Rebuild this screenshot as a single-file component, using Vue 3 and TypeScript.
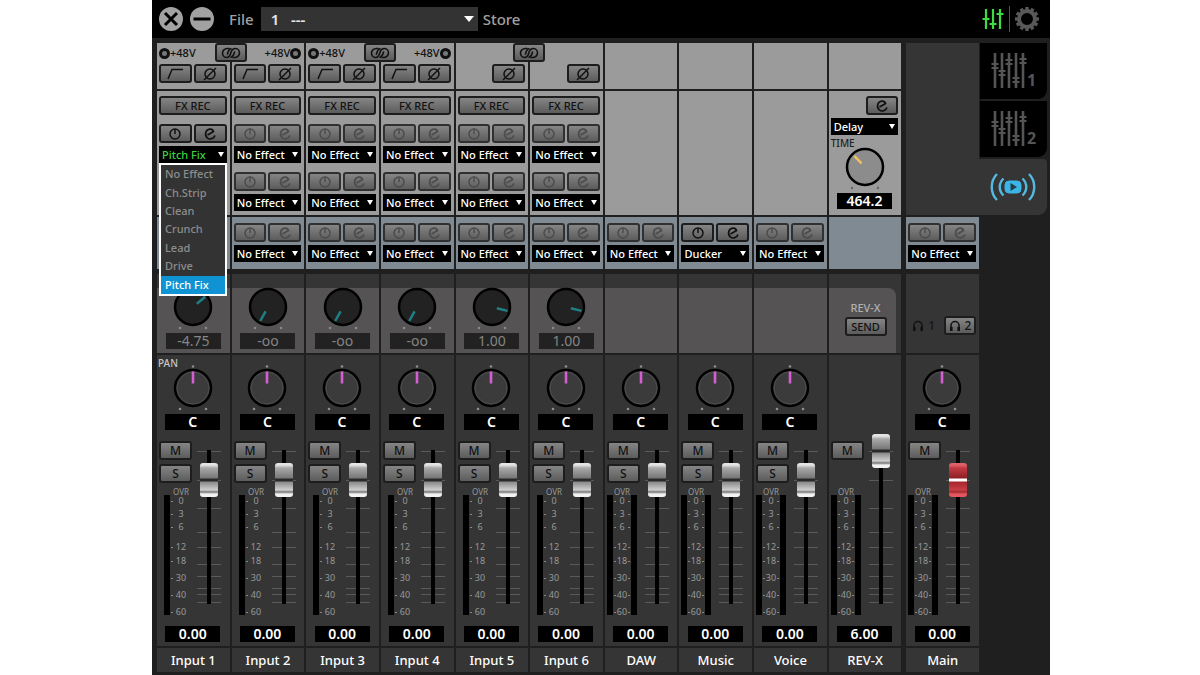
<script setup lang="ts">
import { reactive, ref } from 'vue'

type Fx = { name: string; active: boolean }
type Channel = {
  id: string
  name: string
  phantom?: 'start' | 'end'
  hpf?: boolean
  phase?: boolean
  fx: Fx[]
  insert?: Fx
  send?: { text: string; angle: number }
  pan?: boolean
  solo?: boolean
  stereo?: boolean
  level: string
  position: number
  kind: 'input' | 'stream' | 'reverb' | 'main'
}

const none = (): Fx => ({ name: 'No Effect', active: false })

const input = (n: number, send: string, angle: number, extra: Partial<Channel> = {}): Channel => ({
  id: `input${n}`,
  name: `Input ${n}`,
  phase: true,
  fx: [none(), none()],
  insert: none(),
  send: { text: send, angle },
  pan: true,
  solo: true,
  level: '0.00',
  position: 123,
  kind: 'input',
  ...extra,
})

const stream = (id: string, name: string, insert: Fx): Channel => ({
  id,
  name,
  fx: [],
  insert,
  pan: true,
  solo: true,
  stereo: true,
  level: '0.00',
  position: 123,
  kind: 'stream',
})

const channels = reactive<Channel[]>([
  input(1, '-4.75', 50, { phantom: 'start', hpf: true, fx: [{ name: 'Pitch Fix', active: true }, none()] }),
  input(2, '-oo', 209, { phantom: 'end', hpf: true }),
  input(3, '-oo', 209, { phantom: 'start', hpf: true }),
  input(4, '-oo', 209, { phantom: 'end', hpf: true }),
  input(5, '1.00', 104),
  input(6, '1.00', 104),
  stream('daw', 'DAW', none()),
  stream('music', 'Music', { name: 'Ducker', active: true }),
  stream('voice', 'Voice', none()),
  { id: 'revx', name: 'REV-X', fx: [], stereo: true, level: '6.00', position: 152, kind: 'reverb' },
  { id: 'main', name: 'Main', fx: [], insert: none(), pan: true, stereo: true, level: '0.00', position: 123, kind: 'main' },
])

const effects = ['No Effect', 'Ch.Strip', 'Clean', 'Crunch', 'Lead', 'Drive', 'Pitch Fix']
const menuOpen = ref(true)
const pick = (name: string) => {
  channels[0].fx[0].name = name
  menuOpen.value = false
}

const editIcon = 'M4.500 8L10.500 4.500C9.500 1 4 1.500 2.800 5.500C1.500 10.500 6 13 9 11.500C10.500 11 11.500 10 12 8.500'

const meterMarks = [
  { t: '0', y: 16 },
  { t: '3', y: 29 },
  { t: '6', y: 42 },
  { t: '12', y: 62 },
  { t: '18', y: 76 },
  { t: '30', y: 93 },
  { t: '40', y: 110 },
  { t: '60', y: 127 },
]
const faderMarks = [17, 46, 74, 98, 113, 130, 142, 154, 160, 168]
const mixKnobs = [
  { x: 4, y: 12 },
  { x: 11, y: 19 },
  { x: 18, y: 8 },
  { x: 25, y: 26 },
  { x: 32, y: 7 },
]
const teeth = Array.from({ length: 12 }, (_, i) => i * 30)
</script>

<template>
  <main class="app">
    <header class="topbar">
      <button class="round" aria-label="Close">
        <svg width="26" height="26" viewBox="0 0 26 26"><circle cx="13" cy="13" r="12" fill="#a2a2a2" /><path d="M7 7l12 12M19 7L7 19" stroke="#000" stroke-width="3" /></svg>
      </button>
      <button class="round" aria-label="Minimize">
        <svg width="26" height="26" viewBox="0 0 26 26"><circle cx="13" cy="13" r="12" fill="#a2a2a2" /><path d="M4.500 13h17" stroke="#000" stroke-width="3" /></svg>
      </button>
      <label class="file" for="file">File</label>
      <span class="pick filepick">
        <select id="file"><option>1&nbsp;&nbsp;&nbsp;---</option></select>
        <svg width="10" height="6" viewBox="0 0 10 6"><path d="M0 0h10L5 6z" fill="#fff" /></svg>
      </span>
      <button class="store">Store</button>
      <nav class="views">
        <button aria-label="Mixer">
          <svg width="24" height="24" viewBox="0 0 24 24" stroke="#3fdc3f" stroke-width="2.200" fill="none"><path d="M5 2v20M12 2v20M19 2v20M1.500 12h7M8.500 17h7M15.500 7h7" /></svg>
        </button>
        <i class="bar"></i>
        <button aria-label="Settings">
          <svg width="26" height="26" viewBox="0 0 26 26">
            <rect v-for="a in teeth" :key="a" x="11.300" y="1" width="3.400" height="5" fill="#585858" :transform="`rotate(${a} 13 13)`" />
            <circle cx="13" cy="13" r="8" fill="none" stroke="#585858" stroke-width="4" />
          </svg>
        </button>
      </nav>
    </header>

    <div class="body">
      <div class="rack">
        <section v-for="(c, n) in channels" :key="c.id" class="strip" :class="c.kind" :aria-label="c.name">
          <div class="cell head">
            <div v-if="c.phantom" class="phantom" :class="{ mirrored: c.phantom === 'end' }">
              <i class="led"></i><span>+48V</span>
            </div>
            <div class="pair">
              <button v-if="c.hpf" class="btn" aria-label="High-pass filter">
                <svg width="18" height="13" viewBox="0 0 18 13"><path d="M2 12l4-9.500h11" fill="none" stroke="#111" stroke-width="1.500" /></svg>
              </button>
              <span v-else></span>
              <button v-if="c.phase" class="btn" aria-label="Phase">
                <svg width="16" height="14" viewBox="0 0 16 14" fill="none" stroke="#111" stroke-width="1.500"><circle cx="8" cy="7" r="5" /><path d="M2 13L14 1" /></svg>
              </button>
            </div>
            <button v-if="c.kind === 'input' && n % 2 === 0" class="btn link" aria-label="Link channels">
              <svg width="20" height="12" viewBox="0 0 20 12" fill="none" stroke="#111" stroke-width="1.600" stroke-linecap="round">
                <path d="M8 1.500H6.500C3.500 1.500 1.500 3.800 1.500 6S3 10.500 5.500 10.500C8.500 10.500 9.300 8 9.800 6C10.400 3.500 11.500 1.500 14.500 1.500C17 1.500 18.500 3.800 18.500 6S16.500 10.500 13.500 10.500H12" />
                <path d="M6.500 7C7 4.500 8 2.500 10 1.800M13.500 5C13 7.500 12 9.500 10 10.200" />
              </svg>
            </button>
          </div>

          <div class="cell effects">
            <button v-if="c.kind === 'input'" class="btn rec">FX REC</button>
            <div v-for="(f, i) in c.fx" :key="i" class="fx">
              <div class="pair">
                <button class="btn" :class="{ off: !f.active }" aria-label="Effect on">
                  <svg width="14" height="14" viewBox="0 0 14 14" fill="none" stroke="currentColor" stroke-width="1.500"><circle cx="7" cy="7" r="5" /><path d="M7 2v5" /></svg>
                </button>
                <button class="btn" :class="{ off: !f.active }" aria-label="Edit effect">
                  <svg width="14" height="14" viewBox="0 0 14 14" fill="none" stroke="currentColor" stroke-width="1.700"><path :d="editIcon" /></svg>
                </button>
              </div>
              <span class="pick" :class="{ lit: f.name === 'Pitch Fix' }">
                <select v-model="f.name" :aria-label="`${c.name} effect ${i + 1}`"><option v-for="e in effects" :key="e">{{ e }}</option></select>
                <svg width="6" height="5" viewBox="0 0 6 5"><path d="M0 0h6L3 5z" fill="#fff" /></svg>
              </span>
              <ul v-if="n === 0 && i === 0 && menuOpen" class="menu" role="listbox" aria-label="Effect">
                <li v-for="e in effects" :key="e" role="presentation">
                  <button role="option" :aria-selected="e === f.name" :class="{ chosen: e === f.name }" @click="pick(e)">{{ e }}</button>
                </li>
              </ul>
            </div>
            <template v-if="c.kind === 'reverb'">
              <div class="pair">
                <span></span>
                <button class="btn" aria-label="Edit delay">
                  <svg width="14" height="14" viewBox="0 0 14 14" fill="none" stroke="#111" stroke-width="1.700"><path :d="editIcon" /></svg>
                </button>
              </div>
              <span class="pick">
                <select aria-label="Reverb type"><option>Delay</option></select>
                <svg width="6" height="5" viewBox="0 0 6 5"><path d="M0 0h6L3 5z" fill="#fff" /></svg>
              </span>
              <label class="time" for="time">TIME</label>
              <span class="knob">
                <svg width="44" height="46" viewBox="0 0 44 46">
                  <circle cx="22" cy="23" r="18" fill="#8c8c8c" stroke="#000" stroke-width="2.500" />
                  <g fill="#666"><circle cx="9" cy="44" r="1.200" /><circle cx="35" cy="44" r="1.200" /></g>
                  <path d="M22 7.500v10.500" stroke="#f0c060" stroke-width="2.500" transform="rotate(-44 22 23)" />
                </svg>
                <input id="time" type="range" min="0" max="1000" value="464" />
              </span>
              <output class="value">464.2</output>
            </template>
          </div>

          <div class="cell insert">
            <div v-if="c.insert" class="fx">
              <div class="pair">
                <button class="btn" :class="{ off: !c.insert.active }" aria-label="Insert on">
                  <svg width="14" height="14" viewBox="0 0 14 14" fill="none" stroke="currentColor" stroke-width="1.500"><circle cx="7" cy="7" r="5" /><path d="M7 2v5" /></svg>
                </button>
                <button class="btn" :class="{ off: !c.insert.active }" aria-label="Edit insert">
                  <svg width="14" height="14" viewBox="0 0 14 14" fill="none" stroke="currentColor" stroke-width="1.700"><path :d="editIcon" /></svg>
                </button>
              </div>
              <span class="pick">
                <select :aria-label="`${c.name} insert`"><option>{{ c.insert.name }}</option></select>
                <svg width="6" height="5" viewBox="0 0 6 5"><path d="M0 0h6L3 5z" fill="#fff" /></svg>
              </span>
            </div>
          </div>

          <div class="cell send">
            <template v-if="c.send">
              <span class="knob">
                <svg width="44" height="46" viewBox="0 0 44 46">
                  <circle cx="22" cy="23" r="18" fill="#222" stroke="#000" stroke-width="2.500" />
                  <g fill="#8a8888"><circle cx="9" cy="44" r="1.300" /><circle cx="35" cy="44" r="1.300" /></g>
                  <path d="M22 7v11" stroke="#1f7f85" stroke-width="2.500" :transform="`rotate(${c.send.angle} 22 23)`" />
                </svg>
                <input type="range" :aria-label="`${c.name} send`" />
              </span>
              <output class="value dim">{{ c.send.text }}</output>
            </template>
            <template v-else-if="c.kind === 'reverb'">
              <span class="revname">REV-X</span>
              <button class="btn sendbtn">SEND</button>
            </template>
            <div v-else-if="c.kind === 'main'" class="phones">
              <button v-for="p in 2" :key="p" :class="p === 2 ? 'btn' : 'plain'" :aria-label="`Phones ${p}`">
                <svg width="12" height="12" viewBox="0 0 12 12" fill="none" stroke="#111" stroke-width="1.500"><path d="M2 9V5.500a4 4 0 0 1 8 0V9" /><path d="M2.300 7v4M9.700 7v4" stroke-width="2.600" /></svg>{{ p }}
              </button>
            </div>
          </div>

          <div class="cell mix">
            <span v-if="n === 0" class="panlabel">PAN</span>
            <template v-if="c.pan">
              <span class="knob">
                <svg width="44" height="46" viewBox="0 0 44 46">
                  <g fill="#8f8f8f"><circle cx="22" cy="1.500" r="1.300" /><circle cx="9" cy="44" r="1.300" /><circle cx="35" cy="44" r="1.300" /></g>
                  <circle cx="22" cy="23" r="18" fill="#3b3b3b" stroke="#000" stroke-width="2.500" />
                  <circle cx="22" cy="23" r="16" fill="none" stroke="#4d4d4d" />
                  <path d="M22 6.500v12" stroke="#d45fd4" stroke-width="2.600" />
                </svg>
                <input type="range" :aria-label="`${c.name} pan`" />
              </span>
              <output class="value">C</output>
            </template>
            <div class="control">
              <div class="side">
                <button class="btn ms">M</button>
                <button v-if="c.solo" class="btn ms">S</button>
                <svg class="meter" width="33" height="130" viewBox="0 2 33 130">
                  <rect :x="c.stereo ? 0 : 5" y="10" width="6" height="120" />
                  <rect v-if="c.stereo" x="24" y="10" width="6" height="120" />
                  <text class="over" :x="c.stereo ? 15 : 22" y="10" text-anchor="middle">OVR</text>
                  <g v-for="m in meterMarks" :key="m.t">
                    <text :x="c.stereo ? 15 : 22" :y="m.y + 3" text-anchor="middle">{{ m.t }}</text>
                    <path :d="c.stereo ? `M7 ${m.y + 0.5}h2M21 ${m.y + 0.5}h2` : `M12 ${m.y + 0.5}h2`" />
                  </g>
                </svg>
              </div>
              <div class="fader">
                <svg width="24" height="186" viewBox="0 0 24 186">
                  <path v-for="y in faderMarks" :key="y" :d="`M0 ${y + 0.5}h24`" stroke="#5a5a5a" />
                  <rect x="10" y="16" width="4" height="154" fill="#000" />
                </svg>
                <input type="range" min="0" max="152" :value="c.position" :aria-label="`${c.name} level`" />
              </div>
            </div>
            <output class="value level">{{ c.level }}</output>
          </div>

          <h2 class="cell name">{{ c.name }}</h2>
        </section>
      </div>

      <nav class="tabs">
        <button v-for="t in 2" :key="t" class="tab" :aria-label="`Mix ${t}`">
          <svg width="36" height="38" viewBox="0 0 36 38" stroke="#555" fill="none">
            <path v-for="k in mixKnobs" :key="k.x" :d="`M${k.x} 1v35`" stroke-width="2.600" />
            <path v-for="k in mixKnobs" :key="k.x" :d="`M${k.x - 3.5} ${k.y}h7M${k.x - 3.5} ${k.y + 4}h7`" stroke-width="2" />
          </svg>
          <b>{{ t }}</b>
        </button>
        <button class="tab current" aria-label="Streaming">
          <svg width="46" height="28" viewBox="0 0 46 28" fill="none" stroke="#54b9e0" stroke-width="2.400">
            <path d="M7 1C0 8 0 20 7 27M39 1c7 7 7 19 0 26M13.500 5.500c-5 5-5 12 0 17M32.500 5.500c5 5 5 12 0 17" />
            <rect x="15" y="8" width="16" height="12" rx="4" fill="#3ab5e6" stroke="#3ab5e6" stroke-width="1" />
            <path d="M20.500 10l6.500 4-6.500 4z" fill="#243c48" stroke="none" />
          </svg>
        </button>
      </nav>
    </div>
  </main>
</template>

<style>
body {
  margin: 0;
  background: #fff;
}
</style>

<style scoped>
.app {
  margin: 0 150px 0 152px;
  min-height: 100vh;
  background: #1f1f1f;
  font: 500 11px/14px 'Noto Sans', 'Open Sans', sans-serif;
  color: #fff;
}
.app *,
.app *::before {
  box-sizing: border-box;
}
button,
select {
  font: inherit;
  color: inherit;
  margin: 0;
  padding: 0;
  border: 0;
  background: none;
}
svg {
  display: block;
}
.topbar {
  display: flex;
  align-items: center;
  height: 38px;
  padding: 0 10px 0 6px;
  background: #000;
  color: #a0a0a0;
  font-size: 15px;
  line-height: 20px;
}
.round {
  width: 26px;
  margin-right: 5px;
}
.file {
  margin: 0 7px 0 9px;
}
.pick {
  display: flex;
  align-items: center;
  height: 17px;
  margin-top: 3px;
  background: #000;
}
.pick select {
  flex: 1;
  min-width: 0;
  height: 100%;
  padding-left: 3px;
  appearance: none;
  outline: 0;
  line-height: 17px;
}
.pick svg {
  flex: none;
  margin-right: 3px;
  pointer-events: none;
}
.pick.lit select {
  color: #3fd23f;
}
.filepick.pick {
  width: 217px;
  height: 24px;
  margin-top: 0;
  background: #333;
}
.filepick.pick select {
  padding-left: 10px;
  font-size: 15px;
  font-weight: 600;
  line-height: 24px;
  color: #e8e8e8;
}
.filepick.pick svg {
  margin-right: 4px;
}
.store {
  margin-left: 5px;
}
.views {
  display: flex;
  align-items: center;
  gap: 4px;
  margin-left: auto;
}
.bar {
  width: 1px;
  height: 26px;
  background: #555;
}
.body {
  display: flex;
  padding: 5px 3px 3px 5px;
}
.rack {
  flex: 1;
  display: grid;
  grid-template-columns: repeat(11, minmax(0, 1fr));
  grid-template-rows: 46px minmax(124px, auto) minmax(52px, auto) minmax(82px, auto) minmax(291px, auto) minmax(24px, auto);
  gap: 2px;
}
.strip {
  grid-row: 1 / -1;
  display: grid;
  grid-template-rows: subgrid;
}
.cell {
  position: relative;
  background: #353535;
}
.head,
.effects {
  background: #9b9b9b;
}
.main {
  margin-left: 3px;
  margin-right: -3px;
}
.main .head {
  background: #353535;
  margin-bottom: -2px;
}
.main .effects {
  background: #353535;
}
.head {
  display: flex;
  flex-direction: column;
  justify-content: flex-end;
  padding: 0 3px 6px 2px;
}
.phantom {
  display: flex;
  align-items: center;
  height: 14px;
  margin-bottom: 4px;
  color: #111;
}
.phantom.mirrored {
  flex-direction: row-reverse;
}
.led {
  width: 11px;
  height: 11px;
  border: 3px solid #111;
  border-radius: 50%;
  background: #777;
}
.pair {
  display: grid;
  grid-template-columns: 1fr 1fr;
  gap: 2px;
}
.btn {
  display: flex;
  align-items: center;
  justify-content: center;
  height: 19px;
  border: 2px solid #1d1d1d;
  border-radius: 3px;
  background: linear-gradient(#858585, #5c5c5c);
  color: #111;
}
.btn.off {
  border-color: #303030;
  color: #4c4c4c;
}
.link {
  position: absolute;
  z-index: 2;
  top: 0;
  right: -17px;
  width: 32px;
}
.effects {
  padding: 5px 3px 4px 2px;
}
.rec {
  width: 100%;
}
.effects .fx {
  position: relative;
  margin-top: 9px;
}
.menu {
  position: absolute;
  z-index: 5;
  top: 39px;
  left: 0;
  right: 0;
  display: flex;
  flex-direction: column;
  height: 133px;
  margin: 0;
  padding: 0;
  list-style: none;
  border: 2px solid #fff;
  background: #333;
  color: #8d8d8d;
}
.menu li {
  flex: 1;
  display: flex;
}
.menu button {
  width: 100%;
  padding-left: 4px;
  text-align: left;
}
.menu .chosen {
  background: #0f93d2;
  color: #fff;
}
.time {
  display: block;
  margin-top: 1px;
  font-size: 10px;
  color: #222;
}
.knob {
  display: grid;
  justify-content: center;
}
.knob > * {
  grid-area: 1 / 1;
}
.knob input {
  width: 44px;
  height: 46px;
  margin: 0;
  opacity: 0;
}
.reverb .effects .knob {
  margin-top: -6px;
}
.value {
  display: block;
  width: 55px;
  height: 16px;
  margin: 3px auto 0;
  background: #000;
  font-size: 14px;
  font-weight: 600;
  line-height: 16px;
  text-align: center;
}
.value.dim {
  background: #222;
  color: #858585;
  font-weight: 400;
}
.value.level {
  margin-top: 6px;
}
.insert {
  padding: 6px 3px 0 2px;
  background: #7f8a93;
}
.send {
  margin-top: 3px;
  padding-top: 10px;
  background: linear-gradient(#353535 14px, #555354 14px);
}
.reverb .send {
  padding: 27px 0 0 1px;
  background: #353535;
  text-align: center;
}
.reverb .send::before {
  content: '';
  position: absolute;
  inset: 14px 5px 0 0;
  border-radius: 0 8px 0 0;
  background: #555354;
}
.revname {
  position: relative;
  display: block;
  color: #b0b0b0;
}
.sendbtn {
  position: relative;
  width: 42px;
  margin: 2px auto 0;
}
.main .send {
  background: #353535;
}
.phones {
  display: flex;
  align-items: center;
  gap: 4px;
  padding: 32px 3px 0 6px;
  font-size: 12px;
}
.phones button {
  gap: 4px;
  color: #151515;
}
.phones .plain {
  flex: 1;
  display: flex;
  align-items: center;
}
.phones .btn {
  width: 32px;
}
.mix {
  display: flex;
  flex-direction: column;
  padding: 10px 3px 4px 2px;
}
.panlabel {
  position: absolute;
  top: 1px;
  left: 1px;
  font-size: 10px;
  color: #c4c4c4;
}
.control {
  display: flex;
  gap: 5px;
  margin-top: auto;
}
.side {
  width: 33px;
  height: 186px;
  display: flex;
  flex-direction: column;
  gap: 4px;
  padding: 7px 0 3px;
}
.ms {
  width: 33px;
  font-size: 12px;
}
.meter {
  flex: none;
  margin-top: auto;
}
.meter text {
  font-size: 9px;
  font-weight: 400;
  fill: #999;
}
.meter .over {
  font-size: 8px;
}
.meter path {
  stroke: #888;
}
.fader {
  display: grid;
  justify-items: center;
}
.fader > * {
  grid-area: 1 / 1;
}
.fader input {
  appearance: none;
  writing-mode: vertical-lr;
  direction: rtl;
  width: 18px;
  height: 186px;
  margin: 0;
  background: transparent;
}
.fader input::-webkit-slider-runnable-track {
  width: 18px;
  background: transparent;
}
.fader input::-webkit-slider-thumb {
  appearance: none;
  width: 18px;
  height: 34px;
  border-radius: 3px;
  background: linear-gradient(#e4e4e4 0 2px, #a8a8a8 5px, #777 15px, #2a2a2a 16px 18px, #8a8a8a 19px, #cfcfcf 27px, #777 29px, #f2f2f2 31px);
}
.main .fader input::-webkit-slider-thumb {
  background: linear-gradient(#e06068 0 2px, #c23a42 5px, #8e1e25 15px, #fff 16px 18px, #a8262e 19px, #c93e45 27px, #a02a30 29px, #e5565e 31px);
}
.name {
  margin: 0;
  font-size: 13px;
  font-weight: 500;
  line-height: 24px;
  text-align: center;
}
.tabs {
  width: 68px;
  margin-left: 3px;
  display: flex;
  flex-direction: column;
  gap: 2px;
}
.tab {
  display: flex;
  align-items: center;
  justify-content: center;
  height: 56px;
  margin-left: 1px;
  border-radius: 0 0 9px 0;
  background: #000;
  color: #555;
}
.tab b {
  align-self: flex-end;
  padding-bottom: 9px;
  font-size: 16px;
  line-height: 20px;
}
.tab.current {
  margin-left: 0;
  border-radius: 0 4px 9px 0;
  background: #353535;
}
</style>
